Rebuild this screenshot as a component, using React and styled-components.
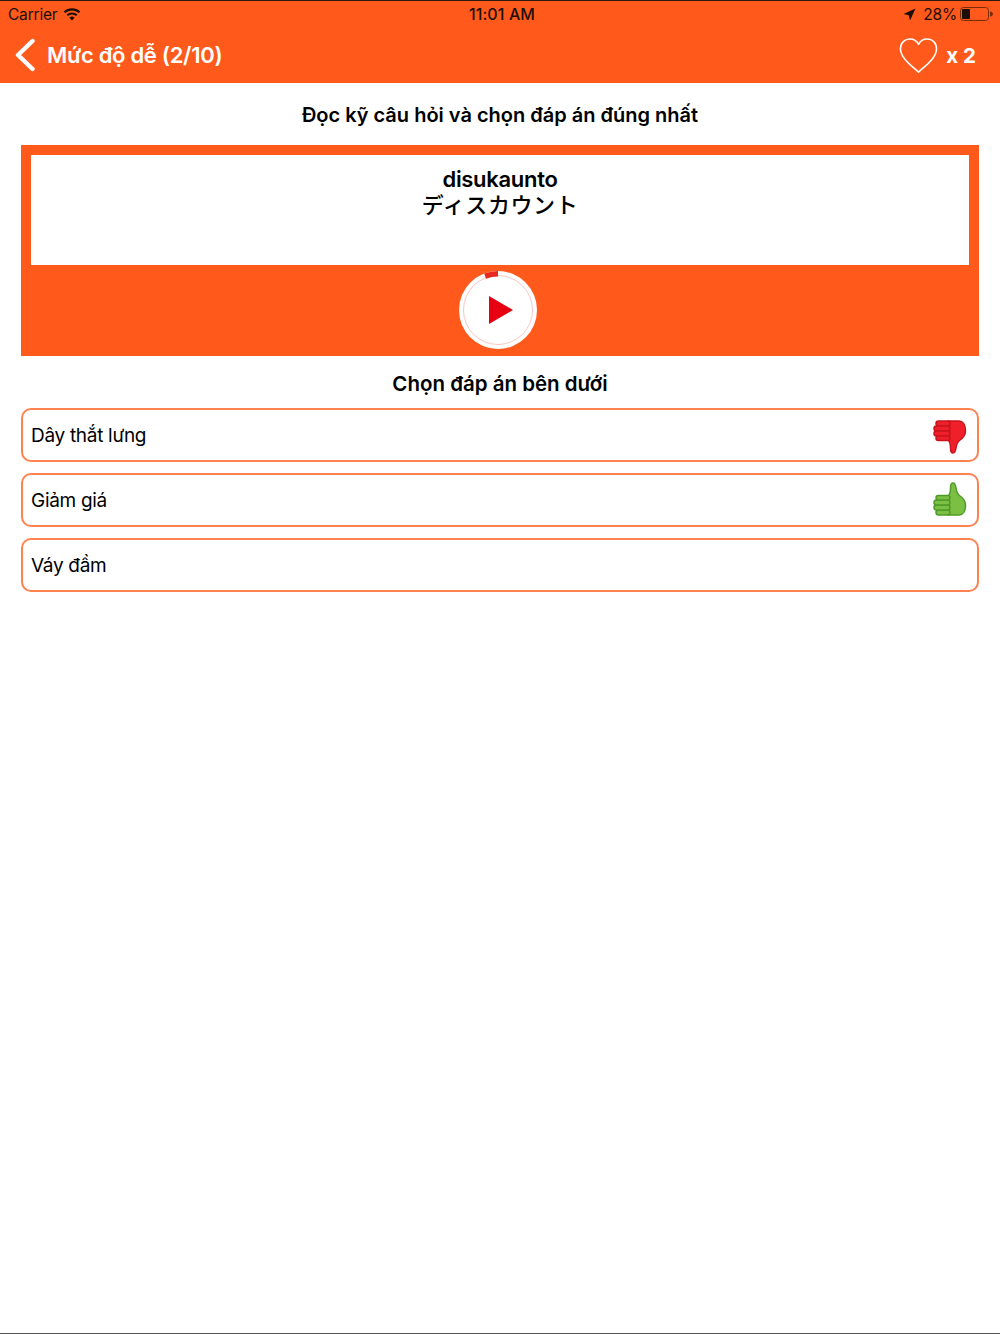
import React from "react";
import styled, { createGlobalStyle } from "styled-components";

const Global = createGlobalStyle`
  html, body { margin: 0; padding: 0; background: #fff; }
  body { font-family: Inter, "Noto Sans CJK JP", sans-serif; color: #000; }
`;
const Page = styled.div`
  width: 1000px; height: 1334px; box-sizing: border-box; display: flex; flex-direction: column;
  border-top: 1px solid #2a1a10; border-bottom: 1px solid #555; background: #fff; overflow: hidden;
`;
const Header = styled.header`
  height: 82px; background: #ff5a1b; display: flex; flex-direction: column; flex: none;
`;
const StatusBar = styled.div`
  height: 26px; display: grid; grid-template-columns: 1fr auto 1fr; align-items: center;
  padding: 0 7px 0 8px; font-size: 15.5px; color: #1d0f08; letter-spacing: -0.2px;
`;
const StatusSide = styled.div`
  display: flex; align-items: center; gap: ${p => p.$gap || 6}px; justify-content: ${p => p.$end ? "flex-end" : "flex-start"};
`;
const Clock = styled.div` font-weight: 500; font-size: 16px; letter-spacing: 0.1px; padding-left: 3px; `;
const NavBar = styled.div`
  flex: 1; display: flex; align-items: center; justify-content: space-between;
  padding: 0 24px 0 15px; color: #fff; font-weight: 600;
`;
const NavLeft = styled.div` display: flex; align-items: center; gap: 12px; font-size: 22px; letter-spacing: -0.3px; `;
const NavRight = styled.div` display: flex; align-items: center; gap: 8px; font-size: 20.5px; font-weight: 700; `;
const Content = styled.main` padding: 0 21px; display: flex; flex-direction: column; `;
const Instruction = styled.h1`
  margin: 0; height: 62px; box-sizing: border-box; padding-top: 2px; display: flex; align-items: center; justify-content: center;
  font-size: 20px; font-weight: 600; letter-spacing: 0;
`;
const Card = styled.section`
  background: #ff5a1b; padding: 10px 10px 0; height: 211px; box-sizing: border-box;
  display: flex; flex-direction: column; align-items: center;
`;
const WordBox = styled.div`
  align-self: stretch; height: 110px; background: #fff; text-align: center; padding-top: 13px; box-sizing: border-box;
  font-size: 22px;
`;
const Romaji = styled.div` font-weight: 600; letter-spacing: -0.3px; line-height: 23px; `;
const Kana = styled.div` font-family: "Noto Sans CJK JP", sans-serif; font-size: 22px; line-height: 24px; letter-spacing: 0.6px; font-weight: 500; `;
const PlayWrap = styled.div` margin: 5px 0 0 -5px; width: 80px; height: 80px; `;
const Subtitle = styled.h2`
  margin: 0; height: 52px; box-sizing: border-box; padding-top: 3px; display: flex; align-items: center; justify-content: center;
  font-size: 20.5px; font-weight: 600; letter-spacing: 0;
`;
const Options = styled.div` display: flex; flex-direction: column; gap: 11px; `;
const Option = styled.div`
  height: 54px; box-sizing: border-box; border: 2px solid #ff8250; border-radius: 10px;
  padding: 1px 10px 0 8px; display: flex; align-items: center; justify-content: space-between;
  font-size: 19px; letter-spacing: -0.3px;
`;
const ThumbIcon = styled.svg`
  flex: none; margin-top: ${p => p.$down ? 3 : -3}px;
  transform: ${p => p.$down ? "none" : "scaleY(-1)"};
`;

const Wifi = () => (
  <svg width="18" height="13" viewBox="0 0 18 13" fill="#1d0f08">
    <path d="M9 12.6 6.4 9.7a3.8 3.8 0 0 1 5.2 0z" />
    <path d="M4.9 8.1 3.5 6.5a8.2 8.2 0 0 1 11 0l-1.4 1.6a6 6 0 0 0-8.2 0z" />
    <path d="M2.2 5 .7 3.4a12.3 12.3 0 0 1 16.6 0L15.8 5a10.2 10.2 0 0 0-13.6 0z" />
  </svg>
);
const Arrow = () => (
  <svg width="13" height="13" viewBox="0 0 13 13" fill="#1d0f08"><path d="M12.5.5 7 12.5l-1.3-5.2L.5 6z" /></svg>
);
const Battery = () => (
  <svg width="33" height="14" viewBox="0 0 33 14">
    <rect x=".5" y=".5" width="28" height="13" rx="3" fill="none" stroke="#7a2c08" />
    <rect x="2" y="2" width="8" height="10" rx="1" fill="#1d0f08" />
    <path d="M30 4.5c1.7.2 3 1.2 3 2.5s-1.300 2.300-3 2.500z" fill="#7a2c08" />
  </svg>
);
const Chevron = () => (
  <svg width="20" height="34" viewBox="0 0 20 34" fill="none" stroke="#fff" strokeWidth="4.4" strokeLinecap="round" strokeLinejoin="round">
    <path d="M17.500 3 3 17l14.500 14" />
  </svg>
);
const Heart = () => (
  <svg width="39" height="37" viewBox="0 0 40 37" fill="none" stroke="#fff" strokeWidth="1.6" strokeLinejoin="round">
    <path d="M20 35.500C13 29 1.500 21 1.500 11.500 1.500 5.500 6 1.500 11 1.500c4 0 7.300 2 9 5.500 1.700-3.500 5-5.500 9-5.500 5 0 9.500 4 9.500 10C38.500 21 27 29 20 35.500z" />
  </svg>
);
const PlayIcon = () => (
  <svg width="80" height="80" viewBox="0 0 80 80">
    <circle cx="40" cy="40" r="39" fill="#fff" />
    <circle cx="40" cy="40" r="34.500" fill="#fff" stroke="#f9c6c2" strokeWidth="1" />
    <path d="M26.200 3.600A39 39 0 0 1 40 1v5.500a33.500 33.500 0 0 0-12 2.200z" fill="#e8291f" />
    <path d="M31 26v28l24-14z" fill="#e60012" />
  </svg>
);
const Thumb = ({ down }) => {
  const fill = down ? "#f0202a" : "#7cc043";
  const stroke = down ? "#c8141f" : "#4f9a2a";
  return (
    <ThumbIcon $down={down} width="35" height="36" viewBox="0 0 35 36">
      <g fill={fill} stroke={stroke} strokeWidth="1.500" strokeLinejoin="round">
        <path d="M16 2h11c4 0 6.500 4 6.500 9.500 0 5-3 8-6 10-2 1.500-3 3.500-3.500 7.500-.4 3-1 5-3 5-2 0-2.500-2-2.500-5 0-3 0-6-2.500-8z" />
        <rect x="4" y="2" width="14" height="5" rx="2.500" />
        <rect x="2" y="7" width="16" height="5" rx="2.500" />
        <rect x="2" y="12" width="16" height="5" rx="2.500" />
        <rect x="4" y="17" width="14" height="4.500" rx="2.200" />
      </g>
    </ThumbIcon>
  );
};

export default function App() {
  return (
    <Page>
      <Global />
      <Header>
        <StatusBar>
          <StatusSide><span>Carrier</span><Wifi /></StatusSide>
          <Clock>11:01 AM</Clock>
          <StatusSide $end $gap={7}>
            <Arrow />
            <StatusSide $gap={3}><span>28%</span><Battery /></StatusSide>
          </StatusSide>
        </StatusBar>
        <NavBar>
          <NavLeft><Chevron /><span>Mức độ dễ (2/10)</span></NavLeft>
          <NavRight><Heart /><span>x 2</span></NavRight>
        </NavBar>
      </Header>
      <Content>
        <Instruction>Đọc kỹ câu hỏi và chọn đáp án đúng nhất</Instruction>
        <Card>
          <WordBox>
            <Romaji>disukaunto</Romaji>
            <Kana>ディスカウント</Kana>
          </WordBox>
          <PlayWrap><PlayIcon /></PlayWrap>
        </Card>
        <Subtitle>Chọn đáp án bên dưới</Subtitle>
        <Options>
          <Option>Dây thắt lưng<Thumb down /></Option>
          <Option>Giảm giá<Thumb /></Option>
          <Option>Váy đầm</Option>
        </Options>
      </Content>
    </Page>
  );
}
